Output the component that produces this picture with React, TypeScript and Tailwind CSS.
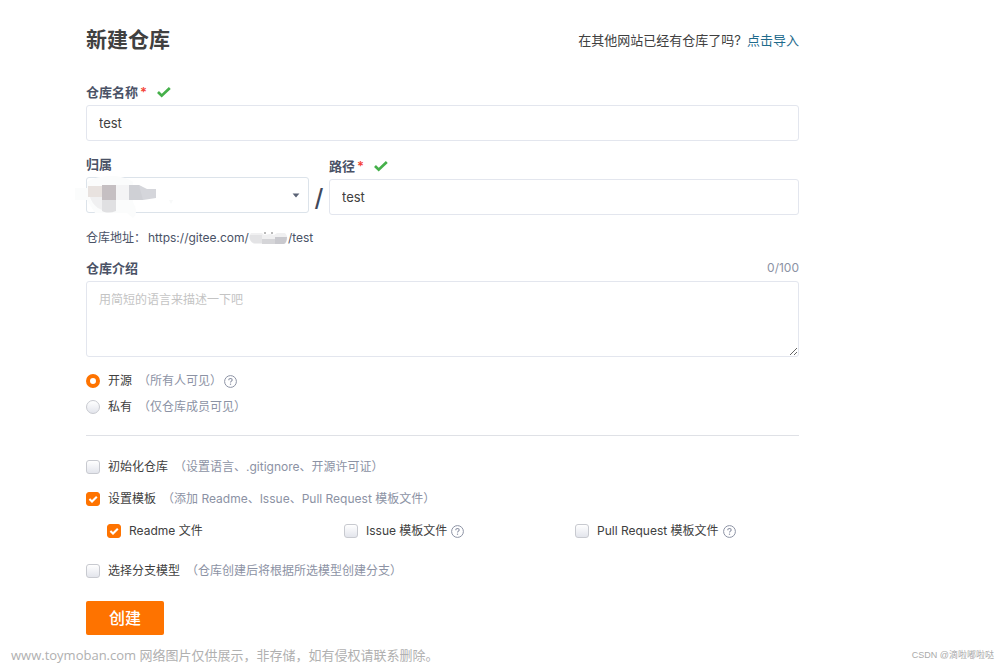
import { ReactNode, useState } from "react";

interface FieldLabelProps {
  htmlFor: string;
  children: ReactNode;
  required?: boolean;
  valid?: boolean;
}

function FieldLabel({ htmlFor, children, required, valid }: FieldLabelProps) {
  return (
    <div className="mb-[3px] flex h-5 items-center">
      <label htmlFor={htmlFor} className="font-semibold text-[#4a5266]">
        {children}
        {required && <span className="ml-0.5 text-[#f44336]">*</span>}
      </label>
      {valid && (
        <svg className="ml-2.5 h-3 w-3.5" viewBox="0 0 14 12" fill="none">
          <path d="M1 6 4.7 9.7 12.8 2" stroke="#45b04a" strokeWidth="2.7" />
        </svg>
      )}
    </div>
  );
}

function HelpIcon({ className }: { className: string }) {
  return (
    <svg className={className} width="13" height="13" viewBox="0 0 13 13" fill="none" stroke="#8c92a4">
      <circle cx="6.5" cy="6.5" r="5.9" />
      <path d="M4.8 5.2c0-1 .7-1.7 1.7-1.7s1.7.6 1.7 1.5c0 1.2-1.7 1.2-1.7 2.6" strokeWidth="1.1" />
      <path d="M6.5 8.6v1.2" strokeWidth="1.2" />
    </svg>
  );
}

interface OptionProps {
  id: string;
  label: string;
  hint?: string;
  help?: boolean;
  checked: boolean;
  onChange: () => void;
}

function Hint({ children }: { children: ReactNode }) {
  return <span className="ml-1.5 text-[#8c92a4]">{children}</span>;
}

function RadioOption({ id, label, hint, help, checked, onChange }: OptionProps) {
  return (
    <div className="flex h-5 items-center text-xs">
      <input
        id={id}
        type="radio"
        name="visibility"
        checked={checked}
        onChange={onChange}
        className="size-3.5 shrink-0 appearance-none rounded-full border border-[#c8cad0] bg-linear-to-b from-white to-[#e3e5ec] checked:border-4 checked:border-[#fe7300] checked:bg-white checked:bg-none"
      />
      <label htmlFor={id} className="ml-2 whitespace-nowrap">
        {label}
        {hint && <Hint>{hint}</Hint>}
      </label>
      {help && <HelpIcon className="ml-0.5" />}
    </div>
  );
}

function CheckOption({ id, label, hint, help, checked, onChange }: OptionProps) {
  return (
    <div className="flex h-5 items-center text-xs">
      <span className="relative flex size-3.5 shrink-0">
        <input
          id={id}
          type="checkbox"
          checked={checked}
          onChange={onChange}
          className="peer size-3.5 appearance-none rounded-[3px] border border-[#c8cad0] bg-linear-to-b from-white to-[#e3e5ec] checked:border-[#fe7300] checked:bg-[#fe7300] checked:bg-none"
        />
        <svg
          className="pointer-events-none absolute inset-0 hidden peer-checked:block"
          viewBox="0 0 14 14"
          fill="none"
        >
          <path d="M3.4 7.1 6 9.6 10.8 4.8" stroke="#fff" strokeWidth="2.1" />
        </svg>
      </span>
      <label htmlFor={id} className="ml-2 whitespace-nowrap">
        {label}
        {hint && <Hint>{hint}</Hint>}
      </label>
      {help && <HelpIcon className="ml-1" />}
    </div>
  );
}

const inputClass =
  "block h-9 w-full rounded-[3px] border border-[#e3e6ee] bg-white px-3 text-[#404040] outline-none";

export default function App() {
  const [name, setName] = useState("test");
  const [path, setPath] = useState("test");
  const [intro, setIntro] = useState("");
  const [visibility, setVisibility] = useState("public");
  const [checks, setChecks] = useState({
    init: false,
    template: true,
    readme: true,
    issue: false,
    pull: false,
    branch: false,
  });

  const toggle = (key: keyof typeof checks) =>
    setChecks((prev) => ({ ...prev, [key]: !prev[key] }));

  return (
    <div className="bg-white font-[Inter,'Noto_Sans_CJK_SC',sans-serif] text-[13px] leading-5 text-[#404040]">
      <form
        className="ml-[86px] w-full max-w-[713px] pt-[26px]"
        onSubmit={(e) => e.preventDefault()}
      >
        <header className="flex h-7 items-center justify-between">
          <h1 className="text-[21px] font-semibold text-[#404040]">新建仓库</h1>
          <p>
            在其他网站已经有仓库了吗?
            <a href="#import" className="ml-1.5 text-[#1f6a8c]">
              点击导入
            </a>
          </p>
        </header>

        <div className="mt-7">
          <FieldLabel htmlFor="name" required valid>
            仓库名称
          </FieldLabel>
          <input id="name" value={name} onChange={(e) => setName(e.target.value)} className={inputClass} />
        </div>

        <div className="mt-[13px] flex items-start">
          <div className="w-[223px] shrink-0">
            <FieldLabel htmlFor="owner">归属</FieldLabel>
            <div className="relative">
              <select
                id="owner"
                className="block h-9 w-full appearance-none rounded-[3px] border border-[#dce3ea] bg-white px-3 outline-none"
              >
                <option value=""></option>
              </select>
              <svg className="pointer-events-none absolute top-4 right-[9px]" width="8" height="5" viewBox="0 0 8 5">
                <path d="M.6.4h6.8L4 4.4z" fill="#5a6275" />
              </svg>
              {/* Masked account name */}
              <svg className="pointer-events-none absolute -top-1 -left-[11px]" width="100" height="46" viewBox="0 0 100 46">
                <path d="M0 15h12V9C22 2 46 0 58 9v20c4 8 4 12 0 16l-6-5H20L12 27H0z" fill="#fbfcfc" />
                <path d="M13 13h14v11H13z" fill="#e8e2df" />
                <path d="M27 12h14v15H27z" fill="#c5bfc2" />
                <path d="M41 12h13v15H41z" fill="#f4f4f5" />
                <path d="M54 12h10l4 3v12H54z" fill="#cfd0d5" />
                <path d="M64 12l8 4h9v9l-13 2z" fill="#d5d6db" />
                <path d="M15 24h12v13c-6-2-10-7-12-13z" fill="#f0f0f1" />
                <path d="M27 27h14v11c-5 2-10 2-14 0z" fill="#e0e0e2" />
                <path d="M94 27h4l-2 4z" fill="#f8f9f9" />
              </svg>
            </div>
          </div>
          <span className="flex h-[88px] w-5 shrink-0 items-center justify-center text-2xl font-medium text-[#40485b]">
            /
          </span>
          <div className="min-w-0 flex-1 pt-0.5">
            <FieldLabel htmlFor="path" required valid>
              路径
            </FieldLabel>
            <input id="path" value={path} onChange={(e) => setPath(e.target.value)} className={inputClass} />
          </div>
        </div>

        <p className="-mt-[14px] flex items-center text-xs leading-5 text-[#4a5266]">
          <span className="mr-0.5">仓库地址：</span>https://gitee.com/
          <svg width="39" height="14" viewBox="0 0 39 14">
            <path d="M2 2h11l2 2 6-1 4 1 3-2h8c3 3 3 8 0 11H6C1 12-1 6 2 2z" fill="#f0f0f1" />
            <path d="M1 4h12v8H5C1 11 0 7 1 4z" fill="#e3e3e5" />
            <path d="M13 8h13v5H13z" fill="#d5d5d8" />
            <path d="M26 6h12c0 3-1 6-3 7h-9z" fill="#c9c9ce" />
            <path d="M15 2h2M22 2h2" stroke="#777" />
          </svg>
          /{path}
        </p>

        <div className="mt-2.5">
          <div className="flex justify-between">
            <FieldLabel htmlFor="intro">仓库介绍</FieldLabel>
            <span className="text-xs leading-5 text-[#8c92a4]">{intro.length}/100</span>
          </div>
          <textarea
            id="intro"
            maxLength={100}
            placeholder="用简短的语言来描述一下吧"
            value={intro}
            onChange={(e) => setIntro(e.target.value)}
            className="block h-19 w-full resize rounded-[3px] border border-[#e3e6ee] px-3 py-2 text-xs leading-5 outline-none placeholder:text-[#c4c4c4]"
          />
        </div>

        <div className="mt-3.5 flex flex-col gap-1.5">
          <RadioOption
            id="public"
            label="开源"
            hint="（所有人可见）"
            help
            checked={visibility === "public"}
            onChange={() => setVisibility("public")}
          />
          <RadioOption
            id="private"
            label="私有"
            hint="（仅仓库成员可见）"
            checked={visibility === "private"}
            onChange={() => setVisibility("private")}
          />
        </div>

        <hr className="mt-[18px] border-[#dfe1e6]" />

        <div className="mt-[21px] flex flex-col gap-3">
          <CheckOption
            id="init"
            label="初始化仓库"
            hint="（设置语言、.gitignore、开源许可证）"
            checked={checks.init}
            onChange={() => toggle("init")}
          />
          <CheckOption
            id="template"
            label="设置模板"
            hint="（添加 Readme、Issue、Pull Request 模板文件）"
            checked={checks.template}
            onChange={() => toggle("template")}
          />
          <div className="grid grid-cols-[237fr_231fr_224fr] pl-[21px]">
            <CheckOption id="readme" label="Readme 文件" checked={checks.readme} onChange={() => toggle("readme")} />
            <CheckOption id="issue" label="Issue 模板文件" help checked={checks.issue} onChange={() => toggle("issue")} />
            <CheckOption id="pull" label="Pull Request 模板文件" help checked={checks.pull} onChange={() => toggle("pull")} />
          </div>
        </div>

        <div className="mt-5">
          <CheckOption
            id="branch"
            label="选择分支模型"
            hint="（仓库创建后将根据所选模型创建分支）"
            checked={checks.branch}
            onChange={() => toggle("branch")}
          />
        </div>

        <button type="submit" className="mt-5 block h-[34px] rounded-xs bg-[#fe7300] px-[23px] text-base font-medium text-white">
          创建
        </button>
      </form>

      <footer className="mt-3 flex items-center justify-between pr-1.5 pl-[11px]">
        <p className="font-['Open_Sans','Noto_Sans_CJK_SC',sans-serif] text-[13px] leading-4 text-[#b0b0b0]">
          www.toymoban.com 网络图片仅供展示，非存储，如有侵权请联系删除。
        </p>
        <p className="font-['Liberation_Sans','Noto_Sans_CJK_SC',sans-serif] text-[9px] leading-4 text-[#aaa]">
          CSDN @滴啦嘟啦哒
        </p>
      </footer>
    </div>
  );
}
